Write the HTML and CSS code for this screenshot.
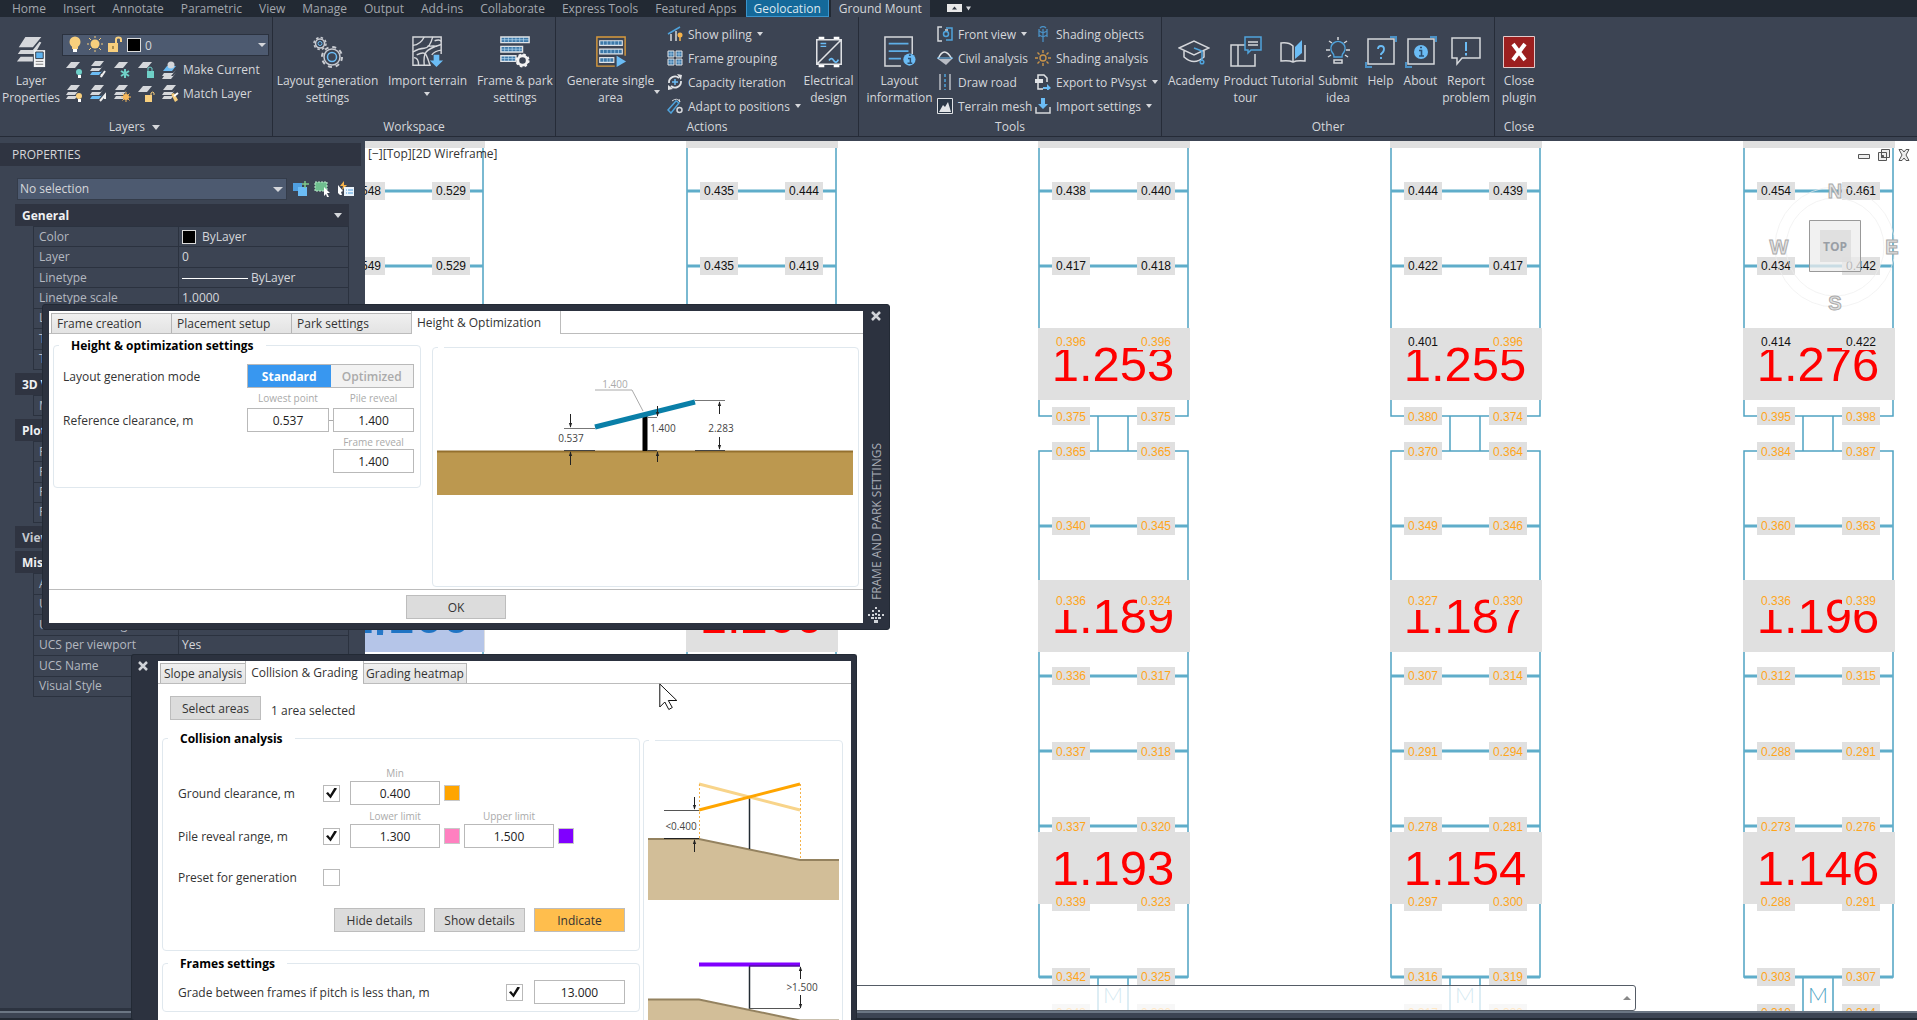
FILE: index.html
```html
<!DOCTYPE html>
<html lang="en">
<head>
<meta charset="utf-8">
<title>Ground Mount</title>
<link rel="stylesheet" href="styles.css">
</head>
<body>
<svg class="defs" aria-hidden="true">
  <defs>
    <symbol id="sheet" viewBox="0 0 18 18"><path d="M5 1h9l-5 6H0z" fill="#d5d7db"/></symbol>
    <symbol id="sheets" viewBox="0 0 18 18"><path d="M5 0h9l-4 5H1z" fill="#d5d7db"/><path d="M2 7h9l2-2-4 5H0zM2 11h9l2-2-4 5H0z" fill="#d5d7db"/></symbol>
    <symbol id="sheetsblue" viewBox="0 0 18 18"><path d="M5 0h9l-4 5H1z" fill="#d5d7db"/><path d="M2 7h9l2-2-4 5H0z" fill="#d5d7db"/><path d="M2 11h9l2-2-4 5H0z" fill="#6bbcf5"/></symbol>
    <marker id="arrow" viewBox="0 0 6 6" refX="5" refY="3" markerWidth="5" markerHeight="5" orient="auto" markerUnits="userSpaceOnUse"><path d="M0 1l6 2-6 2z" fill="#222"/></marker>
    <g id="frame">
      <path class="cad-line" d="M0 0V275H149V0M0 310V836H149V310zM59 275V310M89 275V310M59 836v36M89 836v36"/>
      <path class="cad-rail" d="M0 50H149M0 125H149M0 200H149M0 385H149M0 460H149M0 535H149M0 610H149M0 685H149M0 761H149M0 836H149"/>
      <path class="cad-area" d="M-1-65h152V7H-1zM-1 187h152v72H-1zM-1 439h152v72H-1zM-1 691h152v72H-1z"/>
    </g>
    <path id="tags" class="cad-area" d="M13 41h38v18H13zM98 41h38v18H98zM13 116h38v18H13zM98 116h38v18H98zM13 191h38v18H13zM98 191h38v18H98zM13 266h38v18H13zM98 266h38v18H98zM13 301h38v18H13zM98 301h38v18H98zM13 376h38v18H13zM98 376h38v18H98zM13 451h38v18H13zM98 451h38v18H98zM13 526h38v18H13zM98 526h38v18H98zM13 601h38v18H13zM98 601h38v18H98zM13 676h38v18H13zM98 676h38v18H98zM13 752h38v18H13zM98 752h38v18H98zM13 827h38v18H13zM98 827h38v18H98zM13 863h38v18H13zM98 863h38v18H98z"/>
  </defs>
</svg>
<div class="app">
  <header class="ribbon">
    <nav class="tabs">
      <button>Home</button><button>Insert</button><button>Annotate</button><button>Parametric</button><button>View</button><button>Manage</button><button>Output</button><button>Add-ins</button><button>Collaborate</button><button>Express Tools</button><button>Featured Apps</button><button class="geo">Geolocation</button><button class="current">Ground Mount</button>
      <button class="minimise" aria-label="Minimise ribbon"><svg width="26" height="9"><rect width="15" height="8" x="1" fill="#e8e8e8"/><path d="M6 5.500l2.500-3 2.500 3z" fill="#333b45"/><path d="M20 2.500h5l-2.500 4z" fill="#d5d7db"/></svg></button>
    </nav>
    <div class="panels">
      <section class="panel layers">
        <div class="tools">
          <button class="big"><svg width="32" height="34" viewBox="0 0 32 34"><path d="M10 1h17l-9 11H3zM5 15h13l7-9 2 1-7 12H2zM5 22h13v5H1z" fill="#d5d7db"/><path d="M19 15h12v18H19z" fill="#f4f5f6"/><path d="M21 17h8v7h-8z" fill="#5eb3f0" stroke="#333b45"/><path d="M21 27h8M21 30h8" stroke="#777"/></svg><span>Layer<br>Properties</span></button>
          <div class="layer-tools">
            <div class="layer-combo">
              <svg width="16" height="18" viewBox="0 0 16 18"><circle cx="8" cy="6" r="5.500" fill="#f8cf7d"/><path d="M5 9h6v4H5z" fill="#f8cf7d"/><path d="M6 13h4v3H6z" fill="#fff"/></svg>
              <svg width="16" height="18" viewBox="0 0 16 18"><circle cx="8" cy="8" r="4.500" fill="#f8cf7d"/><path d="M8 0v2M8 14v2M0 8h2M14 8h2M2 2l2 2M12 12l2 2M14 2l-2 2M2 14l2-2" stroke="#f8cf7d"/></svg>
              <svg width="16" height="18" viewBox="0 0 16 18"><path d="M1 7h10v9H1z" fill="#f8cf7d"/><path d="M9 8V3.500q0-2 2.500-2t2.500 2V6" fill="none" stroke="#f8cf7d" stroke-width="2"/><path d="M6 10v3" stroke="#5a4a20"/></svg>
              <i class="black"></i>
              <select aria-label="Layer"><option>0</option></select>
            </div>
            <div class="layer-row">
              <button aria-label="Off"><svg width="18" height="18"><use href="#sheet"/><circle cx="13" cy="11" r="3" fill="#6fd0c8"/><path d="M12 14h3v3h-3z" fill="#fff"/></svg></button><button aria-label="Isolate"><svg width="18" height="18"><use href="#sheetsblue"/><path d="M15 10l-4 6 1-3" stroke="#eee" stroke-width="2" fill="none"/></svg></button><button aria-label="Freeze"><svg width="18" height="18"><use href="#sheet"/><path d="M11 8v9M7 10l8 5M15 10l-8 5" stroke="#6fd0c8" stroke-width="2"/></svg></button><button aria-label="Lock"><svg width="18" height="18"><use href="#sheet"/><path d="M9 10h7v7H9z" fill="#6fd0c8"/><path d="M10 10V7q2-2 4 0v3" fill="none" stroke="#6fd0c8"/></svg></button><button class="named"><svg width="18" height="18"><path d="M5 5h9l-4 5H1z" fill="#6bbcf5"/><path d="M2 12h9l3-3-5 6H0zM2 15h9l3-3-5 6H0z" fill="#d5d7db"/><circle cx="9" cy="4" r="3.500" fill="#d5d7db"/></svg>Make Current</button>
            </div>
            <div class="layer-row">
              <button aria-label="Turn all on"><svg width="18" height="18"><use href="#sheets"/><circle cx="13" cy="11" r="3" fill="#f8cf7d"/><path d="M12 14h3v3h-3z" fill="#fff"/></svg></button><button aria-label="Unisolate"><svg width="18" height="18"><use href="#sheetsblue"/><path d="M10 16l5-6v4" stroke="#eee" stroke-width="2" fill="none"/></svg></button><button aria-label="Thaw"><svg width="18" height="18"><use href="#sheets"/><circle cx="12" cy="12" r="3" fill="#f8b85a"/><path d="M12 7v10M7 12h10M8.500 8.500l7 7M15.500 8.500l-7 7" stroke="#f8b85a"/></svg></button><button aria-label="Unlock"><svg width="18" height="18"><use href="#sheet"/><path d="M7 10h7v7H7z" fill="#f8cf7d"/><path d="M13 10V8q2-2 3 0v2" fill="none" stroke="#f8cf7d"/></svg></button><button class="named"><svg width="18" height="18"><use href="#sheets"/><path d="M9 9l3-1 4 7-3 2z" fill="#f8cf7d"/><path d="M12 11l4-3" stroke="#fff" stroke-width="2"/></svg>Match Layer</button>
            </div>
          </div>
        </div>
        <h2>Layers <i class="caret wide"></i></h2>
      </section>
      <section class="panel workspace">
        <div class="tools">
          <button class="big"><svg width="32" height="32" viewBox="0 0 32 32" fill="none"><circle cx="8" cy="7.500" r="4.500" stroke="#c9ccd2" stroke-width="1.500"/><circle cx="8" cy="7.500" r="6" stroke="#c9ccd2" stroke-width="1.500" stroke-dasharray="2.500 2.200"/><circle cx="8" cy="7.500" r="2" stroke="#6bbcf5"/><circle cx="20" cy="21" r="8" stroke="#c9ccd2" stroke-width="1.500"/><circle cx="20" cy="21" r="10" stroke="#c9ccd2" stroke-width="2" stroke-dasharray="4 3.850"/><circle cx="20" cy="21" r="4.500" stroke="#6bbcf5" stroke-width="1.500"/></svg><span>Layout generation<br>settings</span></button>
          <button class="big"><svg width="34" height="34" viewBox="0 0 34 34" fill="none" stroke="#d5d7db" stroke-width="1.500"><path d="M20 31H1V1h30v18"/><path d="M1 10q8-1 12-9M1 17q6-4 12-4t9-12M7 31q0-8-5-8M13 31q-1-10 2-14t16-8M5 20q8-4 10 0t4 11M31 15q-7 1-10 5M24 5q6-2 7 1M16 11q8-1 11 0"/><path d="M23 20h6v6h4l-7 7-7-7h4z" fill="#6bbcf5" stroke="none"/></svg><span>Import terrain<br><i class="caret"></i></span></button>
          <button class="big"><svg width="34" height="34" viewBox="0 0 34 34" fill="none"><path d="M2 1h30v6H2zM2 11h23v6H2zM2 21h16v6H2z" fill="#3c78a8" stroke="#e1e3e6" stroke-width="1.500"/><path d="M6 1v6M10 1v6M14 1v6M18 1v6M22 1v6M26 1v6M6 11v6M10 11v6M14 11v6M18 11v6M22 11v6M6 21v6M10 21v6M14 21v6M2 4h30M2 14h23M2 24h16" stroke="#b9dcf5" stroke-width=".7"/><circle cx="25" cy="26" r="5" stroke="#f2f2f2" stroke-width="3" fill="#3c4453"/><circle cx="25" cy="26" r="6.500" stroke="#f2f2f2" stroke-width="2" stroke-dasharray="2.600 2.500"/></svg><span>Frame &amp; park<br>settings</span></button>
        </div>
        <h2>Workspace</h2>
      </section>
      <section class="panel actions">
        <div class="tools">
          <button class="big split"><svg width="32" height="34" viewBox="0 0 32 34" fill="none"><path d="M20 32H1V1h30v20" stroke="#d99a3c" stroke-width="1.500"/><path d="M4 5h24v5H4zM4 14h24v5H4zM4 23h15v5H4z" fill="#3c78a8" stroke="#e1e3e6" stroke-width="1.200"/><path d="M8 5v5M12 5v5M16 5v5M20 5v5M24 5v5M8 14v5M12 14v5M16 14v5M20 14v5M24 14v5M8 23v5M12 23v5M15 23v5" stroke="#b9dcf5" stroke-width=".7"/><path d="M22 21l10 6-10 6z" fill="#6bbcf5"/></svg><span>Generate single<br>area</span><i class="caret"></i></button>
          <div class="small">
            <button><svg width="16" height="16" viewBox="0 0 16 16"><path d="M1 8L13 1" stroke="#4fa3dc" stroke-width="1.500"/><path d="M4 8v7M9 5v10" stroke="#d5d7db" stroke-width="1.500"/><circle cx="13" cy="9" r="2.500" fill="#f5b24a"/><path d="M13 9v6" stroke="#f5b24a" stroke-width="1.500"/></svg>Show piling <i class="caret"></i></button>
            <button><svg width="16" height="16" viewBox="0 0 16 16"><path d="M1 1h6v6H1zM9 1h6v6H9zM1 9h6v6H1zM9 9h6v6H9z" fill="#3c78a8" stroke="#e1e3e6"/><path d="M4 1v6M12 1v6M4 9v6M12 9v6M1 4h6M9 4h6M1 12h6M9 12h6" stroke="#b9dcf5" stroke-width=".6"/></svg>Frame grouping</button>
            <button><svg width="16" height="16" viewBox="0 0 16 16" fill="none"><path d="M2 9a6 6 0 0 1 10-5M14 7a6 6 0 0 1-10 5" stroke="#e1e3e6" stroke-width="1.800"/><path d="M10 0l5 1-1 5zM1 11l5 4-5 1z" fill="#e1e3e6"/><path d="M8 5v6M5 8h6" stroke="#6bbcf5" stroke-width="1.500"/></svg>Capacity iteration</button>
            <button><svg width="16" height="16" viewBox="0 0 16 16" fill="none"><path d="M1 12L9 3l3 2-8 10z" stroke="#4fa3dc" stroke-width="1.500"/><path d="M5 3q5-4 8 1l-1-3" stroke="#d5d7db"/><circle cx="12.500" cy="12" r="2.500" stroke="#d5d7db" stroke-width="1.500"/></svg>Adapt to positions <i class="caret"></i></button>
          </div>
          <button class="big"><svg width="30" height="34" viewBox="0 0 30 34" fill="none"><path d="M2 4h26v26H2zM2 30L28 4" stroke="#e1e3e6" stroke-width="1.600"/><path d="M4 2h6M20 2h6M4 32h6M20 32h6" stroke="#fff" stroke-width="2.500"/><path d="M6 8h6M6 11h6" stroke="#6bbcf5" stroke-width="1.500"/><path d="M15 26q2.500-4 5 0t5-1" stroke="#6bbcf5" stroke-width="1.800"/></svg><span>Electrical<br>design</span></button>
        </div>
        <h2>Actions</h2>
      </section>
      <section class="panel utilities">
        <div class="tools">
          <button class="big"><svg width="34" height="34" viewBox="0 0 34 34" fill="none"><path d="M18 32H1V1h29v18" stroke="#d5d7db" stroke-width="1.600"/><path d="M5 8h21M5 16h21M5 24h13" stroke="#5eaee6" stroke-width="1.800"/><circle cx="27" cy="25" r="6.500" fill="#6bbcf5"/><path d="M25.500 24H28v5M25 29h5M26.500 20.500h2" stroke="#2d4f70" stroke-width="1.600"/></svg><span>Layout<br>information</span></button>
          <div class="small">
            <button><svg width="16" height="16" viewBox="0 0 16 16" fill="none"><path d="M5 1H1v14h4M8 4h3" stroke="#d5d7db" stroke-width="1.500"/><path d="M9 2h6v12H9" stroke="#4fa3dc" stroke-width="1.500"/><circle cx="9" cy="8" r="2.500" stroke="#4fa3dc" stroke-width="1.500"/></svg>Front view <i class="caret"></i></button>
            <button><svg width="16" height="16" viewBox="0 0 16 16" fill="none"><path d="M1 9Q7-5 15 9" stroke="#e1e3e6" stroke-width="1.500"/><path d="M1 9h14l-6 6z" fill="#b8bcc4"/><path d="M0 8h16" stroke="#6bbcf5"/></svg>Civil analysis</button>
            <button><svg width="16" height="16" viewBox="0 0 16 16"><path d="M3 0v16M13 0v16" stroke="#b8bcc4" stroke-width="1.500"/><path d="M8 0v16" stroke="#4fa3dc" stroke-width="1.500" stroke-dasharray="3 2"/></svg>Draw road</button>
            <button><svg width="16" height="16" viewBox="0 0 16 16"><path d="M.5 .5h15v15H.5z" fill="#2b3746" stroke="#e1e3e6"/><path d="M2 14l4-7 2 2 3-5 3 10z" fill="#e1e3e6"/></svg>Terrain mesh</button>
          </div>
          <div class="small">
            <button><svg width="16" height="16" viewBox="0 0 16 16" fill="none"><path d="M8 16V3M8 7L4 5M8 7l4-2M8 11l-4-2M8 11l4-2M4 3v8M12 3v8M5 2q3-3 6 0" stroke="#4a90c4" stroke-width="1.300"/></svg>Shading objects</button>
            <button><svg width="16" height="16" viewBox="0 0 16 16" fill="none" stroke="#c9944a" stroke-width="1.400"><circle cx="8" cy="8" r="3"/><path d="M8 0v3M8 13v3M0 8h3M13 8h3M2.500 2.500l2 2M11.500 11.500l2 2M13.500 2.500l-2 2M2.500 13.500l2-2"/></svg>Shading analysis</button>
            <button><svg width="16" height="16" viewBox="0 0 16 16" fill="none"><path d="M3 5V1h6l3 3v4M3 9v6h5" stroke="#e1e3e6" stroke-width="1.500"/><path d="M0 5h8v4H0z" fill="#e1e3e6"/><path d="M8 13h4v-3l4 4-4 3v-2H8z" fill="#6bbcf5"/></svg>Export to PVsyst <i class="caret"></i></button>
            <button><svg width="16" height="16" viewBox="0 0 16 16" fill="none"><path d="M1 9v6h14V9" stroke="#d5d7db" stroke-width="1.500"/><path d="M6 0h4v6h3l-5 5-5-5h3z" fill="#6bbcf5"/></svg>Import settings <i class="caret"></i></button>
          </div>
        </div>
        <h2>Tools</h2>
      </section>
      <section class="panel other">
        <div class="tools">
          <button class="big"><svg width="32" height="32" viewBox="0 0 32 32" fill="none" stroke="#d5d7db" stroke-width="1.500"><path d="M1 12L16 5l15 7-15 7zM6 15v6q10 9 20 0v-6"/><path d="M16 12l8 3v9" stroke="#4fa3dc"/><circle cx="24" cy="26" r="1.800" stroke="#4fa3dc"/></svg><span>Academy</span></button>
          <button class="big"><svg width="32" height="32" viewBox="0 0 32 32" fill="none" stroke="#d5d7db" stroke-width="1.500"><path d="M15 9H1v21h24V18M8 9v21"/><path d="M15 1h16v13H21l-3 3v-3h-3z" stroke="#4fa3dc"/><path d="M18 6h10M18 9h10"/></svg><span>Product<br>tour</span></button>
          <button class="big"><svg width="32" height="32" viewBox="0 0 32 32" fill="none" stroke="#d5d7db" stroke-width="1.500"><path d="M16 25V10q-4-4-12-3v18q8-1 12 1 4-2 12-1V9"/><path d="M18 11l7-7v13l-7 6z" fill="#6bbcf5" stroke="none"/></svg><span>Tutorial</span></button>
          <button class="big"><svg width="32" height="32" viewBox="0 0 32 32" fill="none" stroke="#d5d7db" stroke-width="1.500"><path d="M12 21q0-3-2-5a7 7 0 1 1 12 0q-2 2-2 5z" stroke="#4fa3dc"/><path d="M16 1v3M4 14h4M24 14h4M7 5l3 2M25 5l-3 2M6 21l3-2M26 21l-3-2M12 24h8v3h-8z"/></svg><span>Submit<br>idea</span></button>
          <button class="big"><svg width="32" height="32" viewBox="0 0 32 32" fill="none"><path d="M3 3h26v25H3z" stroke="#d5d7db" stroke-width="1.500"/><path d="M25 1h6v5M7 31H1v-5" stroke="#4a90c4" stroke-width="2"/><path d="M13 13q0-3 3-3t3 3-3 5v1M16 21v2" stroke="#6bbcf5" stroke-width="1.800"/></svg><span>Help</span></button>
          <button class="big"><svg width="32" height="32" viewBox="0 0 32 32" fill="none"><path d="M3 3h26v25H3z" stroke="#d5d7db" stroke-width="1.500"/><path d="M25 1h6v5M7 31H1v-5" stroke="#4a90c4" stroke-width="2"/><circle cx="16" cy="16" r="7" fill="#6bbcf5"/><path d="M14 14.500h2.500V20M14 20h5M15 11.500h2" stroke="#2d4f70" stroke-width="1.600"/></svg><span>About</span></button>
          <button class="big"><svg width="32" height="32" viewBox="0 0 32 32" fill="none"><path d="M2 2h28v20H12l-5 6v-6H2z" stroke="#d5d7db" stroke-width="1.500"/><path d="M16 6v9M16 17v2.500" stroke="#6bbcf5" stroke-width="2"/></svg><span>Report<br>problem</span></button>
        </div>
        <h2>Other</h2>
      </section>
      <section class="panel closing">
        <div class="tools">
          <button class="big"><svg width="32" height="32" viewBox="0 0 32 32"><path d="M.5 .5h31v31H.5z" fill="#9c1f1f" stroke="#e3c9c9"/><path d="M10 8l12 16M22 8L10 24" stroke="#fff" stroke-width="4"/></svg><span>Close<br>plugin</span></button>
        </div>
        <h2>Close</h2>
      </section>
    </div>
  </header>

  <div class="workarea">
    <aside class="palette">
      <h2>PROPERTIES</h2>
      <div class="selection">
        <select aria-label="Selection"><option>No selection</option></select>
        <button aria-label="Toggle PICKADD"><svg width="16" height="16"><path d="M0 2h9v8H0z" fill="#4f9fe0"/><path d="M5 6h9v9H5z" fill="#6bbcf5"/><path d="M12 0v7M9 3h7" stroke="#7fc98a" stroke-width="1.500"/></svg></button>
        <button aria-label="Select objects"><svg width="18" height="16"><path d="M1 1h12v9H1z" fill="#6fbf8f" stroke="#bfe6cd" stroke-dasharray="2 1"/><path d="M10 6l6 6h-3l2 4-2 0-1-3-2 2z" fill="#fff"/></svg></button>
        <button aria-label="Quick select"><svg width="18" height="16"><path d="M7 0L3 5h3l-1 4 5-5H7z" fill="#f5b24a"/><path d="M1 4l5 6-2 1 1 3-2 0-2-2z" fill="#fff"/><path d="M7 6h10v9H7z" fill="#eaf3fb"/><path d="M9 9h1M11 9h5M9 12h1M11 12h5" stroke="#4f9fe0"/></svg></button>
      </div>
      <h3>General <i class="caret wide"></i></h3>
      <table class="rows7">
        <tr><th>Color</th><td><i class="black"></i>ByLayer</td></tr>
        <tr><th>Layer</th><td>0</td></tr>
        <tr><th>Linetype</th><td><i class="rule"></i>ByLayer</td></tr>
        <tr><th>Linetype scale</th><td>1.0000</td></tr>
        <tr><th>Lineweight</th><td></td></tr>
        <tr><th>Transparency</th><td></td></tr>
        <tr><th>Thickness</th><td></td></tr>
      </table>
      <h3>3D Visualization</h3>
      <table><tr><th>Material</th><td></td></tr></table>
      <h3>Plot style</h3>
      <table class="rows4">
        <tr><th>Plot style</th><td></td></tr>
        <tr><th>Plot style table</th><td></td></tr>
        <tr><th>Plot table att…</th><td></td></tr>
        <tr><th>Plot table type</th><td></td></tr>
      </table>
      <h3 class="dim">View</h3>
      <h3>Misc</h3>
      <table class="rows6">
        <tr><th>Annotation scale</th><td></td></tr>
        <tr><th>UCS icon On</th><td></td></tr>
        <tr><th>UCS icon at origin</th><td></td></tr>
        <tr><th>UCS per viewport</th><td>Yes</td></tr>
        <tr><th>UCS Name</th><td></td></tr>
        <tr><th>Visual Style</th><td></td></tr>
      </table>
    </aside>

    <main class="viewport">
      <svg class="drawing" role="img" aria-label="Frame layout">
        <g transform="translate(-31)">
          <use href="#frame"/>
          <path d="M-1 439h151v72H-1z" fill="#b5c5e8"/>
          <text class="big-value picked" x="74" y="492">1.166</text>
          <use href="#tags"/>
          <g class="values"><text x="32" y="54">0.548</text><text x="117" y="54">0.529</text><text x="32" y="129">0.549</text><text x="117" y="129">0.529</text></g>
          <path d="M43 488h6v6h-6z" fill="#2678c8"/>
        </g>
        <g transform="translate(322)">
          <use href="#frame"/>
          <text class="big-value" x="74" y="492">1.266</text>
          <use href="#tags"/>
          <g class="values"><text x="32" y="54">0.435</text><text x="117" y="54">0.444</text><text x="32" y="129">0.435</text><text x="117" y="129">0.419</text></g>
        </g>
        <g transform="translate(674)">
          <use href="#frame"/>
          <g class="big-value"><text x="74" y="240">1.253</text><text x="74" y="492">1.189</text><text x="74" y="744">1.193</text></g>
          <use href="#tags"/>
          <g class="values"><text x="32" y="54">0.438</text><text x="117" y="54">0.440</text><text x="32" y="129">0.417</text><text x="117" y="129">0.418</text></g>
          <g class="values low"><text x="32" y="205">0.396</text><text x="117" y="205">0.396</text><text x="32" y="280">0.375</text><text x="117" y="280">0.375</text><text x="32" y="315">0.365</text><text x="117" y="315">0.365</text><text x="32" y="389">0.340</text><text x="117" y="389">0.345</text><text x="32" y="464">0.336</text><text x="117" y="464">0.324</text><text x="32" y="539">0.336</text><text x="117" y="539">0.317</text><text x="32" y="615">0.337</text><text x="117" y="615">0.318</text><text x="32" y="690">0.337</text><text x="117" y="690">0.320</text><text x="32" y="765">0.339</text><text x="117" y="765">0.323</text><text x="32" y="840">0.342</text><text x="117" y="840">0.325</text><text x="32" y="876">0.343</text><text x="117" y="876">0.326</text></g>
          <text class="mark" x="74" y="862">M</text>
        </g>
        <g transform="translate(1026)">
          <use href="#frame"/>
          <g class="big-value"><text x="74" y="240">1.255</text><text x="74" y="492">1.187</text><text x="74" y="744">1.154</text></g>
          <use href="#tags"/>
          <g class="values"><text x="32" y="54">0.444</text><text x="117" y="54">0.439</text><text x="32" y="129">0.422</text><text x="117" y="129">0.417</text><text x="32" y="205">0.401</text></g>
          <g class="values low"><text x="117" y="205">0.396</text><text x="32" y="280">0.380</text><text x="117" y="280">0.374</text><text x="32" y="315">0.370</text><text x="117" y="315">0.364</text><text x="32" y="389">0.349</text><text x="117" y="389">0.346</text><text x="32" y="464">0.327</text><text x="117" y="464">0.330</text><text x="32" y="539">0.307</text><text x="117" y="539">0.314</text><text x="32" y="615">0.291</text><text x="117" y="615">0.294</text><text x="32" y="690">0.278</text><text x="117" y="690">0.281</text><text x="32" y="765">0.297</text><text x="117" y="765">0.300</text><text x="32" y="840">0.316</text><text x="117" y="840">0.319</text><text x="32" y="876">0.317</text><text x="117" y="876">0.320</text></g>
          <text class="mark" x="74" y="862">M</text>
        </g>
        <g transform="translate(1379)">
          <use href="#frame"/>
          <g class="big-value"><text x="74" y="240">1.276</text><text x="74" y="492">1.196</text><text x="74" y="744">1.146</text></g>
          <use href="#tags"/>
          <g class="values"><text x="32" y="54">0.454</text><text x="117" y="54">0.461</text><text x="32" y="129">0.434</text><text x="117" y="129">0.442</text><text x="32" y="205">0.414</text><text x="117" y="205">0.422</text></g>
          <g class="values low"><text x="32" y="280">0.395</text><text x="117" y="280">0.398</text><text x="32" y="315">0.384</text><text x="117" y="315">0.387</text><text x="32" y="389">0.360</text><text x="117" y="389">0.363</text><text x="32" y="464">0.336</text><text x="117" y="464">0.339</text><text x="32" y="539">0.312</text><text x="117" y="539">0.315</text><text x="32" y="615">0.288</text><text x="117" y="615">0.291</text><text x="32" y="690">0.273</text><text x="117" y="690">0.276</text><text x="32" y="765">0.288</text><text x="117" y="765">0.291</text><text x="32" y="840">0.303</text><text x="117" y="840">0.307</text><text x="32" y="876">0.310</text><text x="117" y="876">0.314</text></g>
          <text class="mark" x="74" y="862">M</text>
        </g>
      </svg>
      <p class="view-label">[−][Top][2D Wireframe]</p>
      <div class="window-keys">
        <button aria-label="Minimise"><svg width="12" height="12"><path d="M.5 5.500h11v4H.5z" fill="#eee" stroke="#555"/></svg></button>
        <button aria-label="Restore"><svg width="12" height="12" fill="#eee" stroke="#555"><path d="M3.500.500h8v8h-8zM.5 3.500h8v8h-8z"/><path d="M3.500 6.500h2v2h-2z" fill="#555"/></svg></button>
        <button aria-label="Close drawing"><svg width="12" height="12"><path d="M1 .5h3l2 2.500 2-2.500h3L8 6l3 5.500H8L6 9l-2 2.500H1L4 6z" fill="#eee" stroke="#555"/></svg></button>
      </div>
      <svg class="viewcube" width="136" height="132" viewBox="0 0 136 132">
        <circle cx="67" cy="66" r="60" fill="none" stroke="#eee" stroke-opacity=".7"/><circle cx="67" cy="66" r="49" fill="none" stroke="#eee" stroke-opacity=".7"/>
        <path d="M41.500 39.500h51v51h-51z" fill="#ececec" fill-opacity=".75" stroke="#999"/><path d="M52 49h31v32H52z" fill="#dcdcdc" fill-opacity=".8"/>
        <g class="compass"><text x="67" y="17">N</text><text x="11" y="73">W</text><text x="124" y="73">E</text><text x="67" y="129">S</text></g>
        <text class="face" x="67" y="70">TOP</text>
      </svg>
      <div class="command-line"><i></i></div>
    </main>
  </div>
  <footer class="status"></footer>
</div>

<section class="dialog park">
  <div class="dialog-page">
    <nav class="dialog-tabs"><button>Frame creation</button><button>Placement setup</button><button>Park settings</button><button class="current">Height &amp; Optimization</button></nav>
    <div class="park-body">
      <fieldset class="height-settings">
        <legend>Height &amp; optimization settings</legend>
        <span class="name">Layout generation mode</span>
        <div class="mode"><button class="on">Standard</button><button disabled>Optimized</button></div>
        <label class="hint" for="lowest">Lowest point</label><label class="hint col3" for="reveal">Pile reveal</label>
        <span class="name">Reference clearance, m</span>
        <input id="lowest" value="0.537"><i class="link"></i><input id="reveal" value="1.400">
        <label class="hint col3" for="framereveal">Frame reveal</label>
        <input class="col3" id="framereveal" value="1.400">
      </fieldset>
      <fieldset class="preview">
        <legend></legend>
        <svg width="424" height="236" viewBox="0 0 424 236">
          <path d="M4 103h416v44H4z" fill="#bc984f"/><path d="M4 103.500h416" stroke="#94702e" stroke-width="2"/>
          <path d="M162 42h37l11 21" fill="none" stroke="#aaa"/>
          <path d="M212 68v35" stroke="#000" stroke-width="5"/>
          <path d="M162 79L262 54" stroke="#0a7fa8" stroke-width="5"/>
          <path d="M131 80.500h31M214 69.500h10M262 52.500h30" stroke="#777"/><path d="M131 102.500h31M214 102.500h10M262 102.500h30" stroke="#444"/>
          <g stroke="#222" fill="none"><path d="M137.500 66v13" marker-end="url(#arrow)"/><path d="M137.500 117v-13" marker-end="url(#arrow)"/><path d="M224.500 58v10" marker-end="url(#arrow)"/><path d="M224.500 114v-10" marker-end="url(#arrow)"/><path d="M286.500 66V54" marker-end="url(#arrow)"/><path d="M286.500 89v12" marker-end="url(#arrow)"/></g>
          <g class="dims"><text class="pale" x="182" y="40">1.400</text><text x="138" y="94">0.537</text><text x="230" y="84">1.400</text><text x="288" y="84">2.283</text></g>
        </svg>
      </fieldset>
    </div>
    <div class="dialog-foot"><button class="plain">OK</button></div>
  </div>
  <div class="dialog-bar">
    <button aria-label="Close palette"><svg width="10" height="10"><path d="M1 1l8 8M9 1L1 9" stroke="#d0d3d8" stroke-width="2.500"/></svg></button>
    <span>FRAME AND PARK SETTINGS</span>
    <svg width="16" height="16" fill="#d0d3d8"><path d="M7 0h2v2H7zM4 3h2v2H4zM10 3h2v2h-2zM0 7h2v2H0zM4 7h2v2H4zM7 6h2v2H7zM10 7h2v2h-2zM14 7h2v2h-2zM3 10h3v2H3zM7 10h2v2H7zM10 10h3v2h-3zM6 13h4v3H6z"/></svg>
  </div>
</section>

<section class="dialog grading">
  <div class="dialog-bar"><button aria-label="Close palette"><svg width="10" height="10"><path d="M1 1l8 8M9 1L1 9" stroke="#d0d3d8" stroke-width="2.500"/></svg></button></div>
  <div class="dialog-page">
    <nav class="dialog-tabs"><button>Slope analysis</button><button class="current">Collision &amp; Grading</button><button>Grading heatmap</button></nav>
    <div class="areas"><button class="plain">Select areas</button><span>1 area selected</span></div>
    <div class="grading-body">
      <div class="grading-main">
        <fieldset class="collision">
          <legend>Collision analysis</legend>
          <label class="hint min" for="clearance">Min</label>
          <label class="name" for="useclear">Ground clearance, m</label><input type="checkbox" id="useclear" checked><input id="clearance" value="0.400"><i class="swatch amber"></i>
          <label class="hint min" for="lower">Lower limit</label><label class="hint max" for="upper">Upper limit</label>
          <label class="name" for="userange">Pile reveal range, m</label><input type="checkbox" id="userange" checked><input id="lower" value="1.300"><i class="swatch pink"></i><input id="upper" value="1.500"><i class="swatch violet"></i>
          <label class="name preset" for="preset">Preset for generation</label><input class="preset" type="checkbox" id="preset">
          <div class="actions-row"><button class="plain">Hide details</button><button class="plain">Show details</button><button class="plain amber-key">Indicate</button></div>
        </fieldset>
        <fieldset class="frames">
          <legend>Frames settings</legend>
          <label class="name" for="usepitch">Grade between frames if pitch is less than, m</label><input type="checkbox" id="usepitch" checked><input aria-label="Pitch" value="13.000">
        </fieldset>
      </div>
      <fieldset class="sketches">
        <legend></legend>
        <svg width="198" height="300" viewBox="0 0 198 300">
          <path d="M4 98h51l101 21h39v40H4z" fill="#d2be98"/><path d="M4 98h51l101 21h39" fill="none" stroke="#94825f" stroke-width="2"/>
          <path d="M105.500 57v51" stroke="#222b33" stroke-width="1.500"/>
          <path d="M55 43l101 26" stroke="#f8d48a" stroke-width="3"/><path d="M55 69l101-26" stroke="#ffa500" stroke-width="3"/>
          <path d="M55.500 43v55M156.500 43v76" stroke="#f5b24a" stroke-dasharray="2 2"/>
          <path d="M20 69.500h35" stroke="#555"/><path d="M20 97.500h35" stroke="#222"/>
          <g stroke="#222"><path d="M50.500 56v12" marker-end="url(#arrow)"/><path d="M50.500 111V99" marker-end="url(#arrow)"/></g>
          <path d="M4 259h51l101 21h39v20H4z" fill="#d2be98"/><path d="M4 258.500h51l101 21h39" fill="none" stroke="#94825f" stroke-width="2"/>
          <path d="M105.500 225v43" stroke="#222b33" stroke-width="1.500"/>
          <path d="M55 223.500h101" stroke="#8000ff" stroke-width="4"/><path d="M105 225h51" stroke="#3a1470"/><path d="M105 267.500h51" stroke="#555"/>
          <g stroke="#222"><path d="M156.500 238v-12" marker-end="url(#arrow)"/><path d="M156.500 254v13" marker-end="url(#arrow)"/></g>
          <g class="dims"><text x="37" y="89">&lt;0.400</text><text x="158" y="250">&gt;1.500</text></g>
        </svg>
      </fieldset>
    </div>
  </div>
</section>
<svg class="pointer" width="20" height="28" aria-hidden="true"><path d="M.8 1v23l5-5 4 7.500 3.500-2-4-7h8.500z" fill="#fff" stroke="#111"/></svg>
</body>
</html>
```
FILE: styles.css
```css
:root {
  --base: #3c4453;
  --deep: #222933;
  --bar: #2f3441;
  --ink: #d5d7db;
  --ui: "Open Sans", "Noto Sans", sans-serif;
}
* { box-sizing: border-box; }
body { margin: 0; height: 100vh; overflow: hidden; position: relative; background: var(--deep); font: 12px/17px var(--ui); color: var(--ink); }
button { font: inherit; color: inherit; background: none; border: 0; padding: 0; margin: 0; }
select { font: inherit; color: inherit; background: none; border: 0; appearance: none; }
svg { display: block; flex: none; }
h2, h3, p { margin: 0; font: inherit; }
.defs { position: absolute; width: 0; height: 0; }
.app { height: 100%; display: flex; flex-direction: column; }

/* Ribbon */
.ribbon { background: var(--base); flex: none; padding-bottom: 4px; }
.tabs { display: flex; height: 17px; background: var(--deep); color: #a3a7ae; white-space: nowrap; line-height: 15px; padding-left: 4px; }
.tabs button { padding: 0 9px 0 8px; }
.tabs .geo { background: #14699a; border: 1px solid #3a94cc; border-top: 0; color: #dce8f0; padding: 0 7px; margin-right: 2px; }
.tabs .current { background: var(--base); color: #d5d7db; padding: 0 8px; }
.tabs .minimise { padding: 0 16px; }
.panels { display: flex; height: 120px; border-bottom: 1px solid #252b37; }
.panel { display: flex; flex-direction: column; border-right: 1px solid #262c38; padding: 0 3px; white-space: nowrap; }
.panel h2 { text-align: center; line-height: 18px; }
.tools { display: flex; height: 101px; }
.layers { width: 273px; padding-left: 0; }
.workspace, .actions, .utilities { flex: none; }
.workspace { width: 283px; }
.actions, .utilities { width: 303px; }
.other { width: 333px; }
.closing { border: 0; width: 48px; padding: 0; }
.big { display: flex; flex-direction: column; align-items: center; padding-top: 19px; flex: none; }
.big svg { height: 32px; }
.big span { margin-top: 4px; }
.layers .big { width: 62px; }
.workspace .big { width: 103px; }
.workspace .big + .big { width: 97px; }
.workspace .big + .big + .big { width: 78px; }
.actions .big { width: 103px; }
.actions .small + .big { width: 53px; }
.utilities .big { width: 75px; }
.other .tools { display: grid; grid-template-columns: 57px 47px 47px 44px 41px 39px 52px; }
.other .big { width: auto; }
.closing .big { width: 48px; }
.caret { display: inline-block; border: 3px solid transparent; border-top: 4px solid var(--ink); border-bottom: 0; vertical-align: middle; margin-left: 4px; }
.caret.wide { border-width: 5px 4px 0; }
.big .caret { margin: 0; vertical-align: top; margin-top: 3px; }
.split { position: relative; }
.big.split .caret { position: absolute; right: 2px; top: 70px; }
.small { padding-top: 5px; display: flex; flex-direction: column; }
.actions .small { width: 142px; padding-left: 5px; }
.utilities .small { width: 98px; }
.small button { height: 24px; display: flex; align-items: center; gap: 5px; }
.small .caret { margin-left: 0; }
.layer-tools { padding-top: 17px; flex: 1; }
.layer-combo { display: flex; align-items: center; gap: 4px; height: 22px; margin-bottom: 2px; padding: 0 2px 0 4px; background: #4d5a70; border: 1px solid #2b323f; }
.layer-combo select { flex: 1; }
.layer-combo::after { content: ""; border: 4px solid transparent; border-top-color: var(--ink); border-bottom: 0; }
.black { width: 14px; height: 14px; background: #000; border: 1px solid #dcdcdc; display: inline-block; }
.layer-row { display: flex; height: 24px; align-items: center; gap: 6px; padding-left: 4px; }
.layer-row .named { display: flex; gap: 3px; }

/* Properties palette and drawing area */
.workarea { flex: 1; display: flex; min-height: 0; }
.palette { width: 365px; flex: none; background: var(--base); padding: 2px 16px 0 15px; border-bottom: 3px solid #2c3340; overflow: hidden; }
.palette h2 { background: var(--bar); margin: 0 -12px 12px -15px; padding: 3px 0 3px 12px; }
.selection { display: flex; align-items: center; gap: 5px; height: 22px; padding-left: 2px; margin: 0 -12px 4px 0; position: relative; }
.selection select { width: 270px; height: 22px; background: #4d5a70; border: 1px solid #343c4a; padding: 0 2px 2px; margin-right: 1px; flex: none; }
.selection::after { content: ""; position: absolute; left: 258px; top: 9px; border: 5px solid transparent; border-top-color: var(--ink); border-bottom: 0; pointer-events: none; }
.palette h3 { display: flex; justify-content: space-between; align-items: center; height: 22px; background: var(--bar); color: #f0f1f3; font-weight: 700; padding: 0 7px; margin-bottom: 3px; }
.palette h3:has(+ table) { margin-bottom: 0; }
.palette table { width: 316px; margin: 0 0 3px 18px; border-collapse: collapse; table-layout: fixed; line-height: 16px; height: 21px; }
.palette .rows7 { height: 144px; }
.palette .rows4 { height: 82px; }
.palette .rows6 { height: 124px; }
.palette th, .palette td { border: 1px solid #2b323f; padding: 0 3px; text-align: left; font-weight: 400; white-space: nowrap; }
.palette th { width: 145px; padding-left: 5px; color: #b4b8c0; }
.palette .dim { color: #c5c8ce; }
.palette .black { vertical-align: middle; margin-right: 6px; }
.rule { display: inline-block; width: 66px; border-top: 1px solid #fff; vertical-align: middle; margin-right: 3px; }
.viewport { flex: 1; min-width: 0; position: relative; background: #fff; overflow: hidden; color: #333; }
.drawing { width: 100%; height: 100%; }
.cad-line { fill: none; stroke: #4fa3c2; stroke-width: 1.5px; }
.cad-rail { fill: none; stroke: #5fadca; stroke-width: 3px; }
.cad-area { fill: #e0e0e0; }
.values { font: 12px "Liberation Sans", Arial, sans-serif; text-anchor: middle; fill: #111; }
.low { fill: #ffa51a; }
.big-value { font: 49px "Liberation Sans", Arial, sans-serif; text-anchor: middle; fill: #f00; }
.picked { fill: #1f74c4; }
.mark { font: 300 22px Lato, sans-serif; text-anchor: middle; fill: #4fa3c2; }
.view-label { position: absolute; left: 3px; top: 4px; }
.window-keys { position: absolute; right: 7px; top: 8px; display: flex; gap: 8px; }
.viewcube { position: absolute; right: 13px; top: 40px; }
.compass { font: 700 20px "Liberation Sans", Arial, sans-serif; text-anchor: middle; fill: #e3e3e3; stroke: #aaa; }
.face { font: 700 12px var(--ui); text-anchor: middle; fill: #999ea5; }
.command-line { position: absolute; left: 0; right: 281px; bottom: 0; height: 26px; background: rgba(255,255,255,.75); border: 1px solid #555c66; border-radius: 3px; display: flex; align-items: center; justify-content: flex-end; padding-right: 4px; }
.command-line i { border: 4px solid transparent; border-bottom-color: #888; border-top: 0; }
.status { height: 9px; flex: none; background: var(--deep); border-top: 2px solid #6b7684; box-shadow: inset 0 5px var(--base); }

/* Floating dialogs */
.dialog { position: absolute; display: flex; background: #2c323f; border: 1px solid #232a35; border-radius: 3px; color: #333; }
.park { left: 42px; top: 304px; width: 848px; padding: 6px 0 6px 6px; }
.grading { left: 131px; top: 654px; width: 726px; bottom: 0; padding: 6px 5px 0 0; border-bottom: 0; overflow: hidden; }
.dialog-page { flex: 1; min-width: 0; background: #fff; display: flex; flex-direction: column; }
.dialog-bar { width: 26px; flex: none; display: flex; flex-direction: column; align-items: center; justify-content: space-between; color: #a8acb5; }
.grading .dialog-bar { padding-right: 4px; }
.dialog-bar span { writing-mode: vertical-rl; transform: rotate(180deg); margin-top: auto; margin-bottom: 7px; }
.dialog-tabs { display: flex; align-items: flex-end; height: 23px; flex: none; padding-left: 2px; border-bottom: 1px solid #bcbcbc; white-space: nowrap; }
.dialog-tabs button { height: 20px; background: linear-gradient(#f0f0f0, #e3e3e3); border: 1px solid #b5b5b5; border-bottom: 0; margin-right: -1px; padding: 0 5px; text-align: left; }
.dialog-tabs .current { height: 23px; background: #fff; margin-bottom: -1px; border-color: #bcbcbc; border-top: 0; }
.park .dialog-tabs button { width: 121px; }
.park .dialog-tabs .current { width: 150px; }
.grading .dialog-tabs button { width: 86px; padding: 0; text-align: center; }
.grading .dialog-tabs .current { width: 119px; }
.grading .dialog-tabs .current + button { width: 104px; }
fieldset { margin: 0; padding: 0; border: 1px solid #e0e8ee; border-radius: 4px; min-width: 0; }
legend { font-weight: 700; color: #000; padding: 0 12px; height: 17px; }
input { font: inherit; color: #222; text-align: center; height: 24px; border: 1px solid #b9b9b9; margin: 0; padding: 0; background: #fff; min-width: 0; }
input[type="checkbox"] { appearance: none; width: 17px; height: 17px; display: grid; place-items: center; }
input[type="checkbox"]:checked::before { content: ""; width: 11px; height: 11px; background: #111; clip-path: polygon(0 52%, 18% 42%, 38% 66%, 78% 0, 100% 8%, 42% 100%); }
.hint { font-size: 10px; line-height: 16px; color: #aaa; text-align: center; }
.plain { background: #dcdcdc; border: 1px solid #bdbdbd; height: 24px; width: 91px; color: #333; flex: none; }
.park-body { display: flex; justify-content: space-between; align-items: flex-start; padding: 3px 4px 2px 4px; }
.height-settings { width: 368px; height: 151px; display: grid; grid-template-columns: 184px 82px 4px 81px; padding-left: 9px; align-content: start; }
.height-settings legend { margin-left: -4px; }
.height-settings .name { align-self: center; }
.height-settings .col3 { grid-column: 4; }
.height-settings .hint { height: 20px; line-height: 21px; }
.height-settings .col3[for="framereveal"] { height: 17px; line-height: 20px; }
.mode { grid-column: 2 / -1; display: flex; height: 24px; margin-top: 10px; border: 1px solid #b9b9b9; }
.height-settings .name:first-of-type { padding-top: 10px; }
.height-settings label[for="lowest"] { grid-column: 2; }
.mode button { flex: 1; background: #f2f2f2; color: #aaa; font-weight: 600; }
.mode .on { background: #3897f0; color: #fff; font-weight: 700; }
.link { border-top: 1px solid #aaa; align-self: center; }
.preview { width: 427px; height: 240px; margin-top: 10px; }
.preview legend, .sketches legend { padding: 0 3px; margin-left: 5px; height: 1px; }
.dims { font: 10px var(--ui); text-anchor: middle; fill: #444; }
.dims .pale { fill: #aaa; }
.dialog-foot { border-top: 1px solid #bcbcbc; display: flex; justify-content: center; padding: 5px 0 4px; }
.dialog-foot .plain { width: 100px; }
.areas { display: flex; align-items: center; gap: 10px; padding: 12px 0 0 12px; }
.areas span { padding-top: 5px; }
.grading-body { display: flex; gap: 3px; padding: 10px 8px 0 4px; flex: 1; min-height: 0; }
.grading-main { width: 478px; display: flex; flex-direction: column; gap: 4px; flex: none; }
.sketches { flex: 1; margin-top: 10px; height: 320px; }
.collision { height: 221px; flex: none; display: grid; grid-template-columns: 145px 27px 90px 24px 90px 24px; padding: 15px 0 0 15px; align-content: start; align-items: center; }
.collision legend, .frames legend { margin-left: -10px; }
.collision .name { grid-column: 1; }
.collision .swatch { margin-left: 4px; }
.swatch { width: 16px; height: 16px; border: 1px solid #c8c8c8; }
.amber { background: #ffa500; }
.pink { background: #ff80c0; }
.violet { background: #8000ff; }
.collision .hint { height: 19px; line-height: 22px; }
.hint.min { grid-column: 3; }
.hint.max { grid-column: 5; }
.collision .preset { margin-top: 21px; }
.actions-row { grid-column: 1 / -1; display: flex; gap: 9px; margin: 22px 0 0 156px; }
.amber-key { background: #ffbe4d; }
.frames { height: 57px; flex: none; display: grid; grid-template-columns: 328px 28px 91px; padding: 8px 0 0 15px; align-items: center; align-content: start; }
.pointer { position: absolute; left: 659px; top: 683px; }
```
